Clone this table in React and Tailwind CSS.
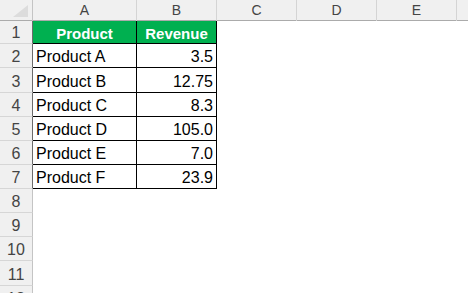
import React from "react";

const products = [
  { name: "Product A", revenue: "3.5" },
  { name: "Product B", revenue: "12.75" },
  { name: "Product C", revenue: "8.3" },
  { name: "Product D", revenue: "105.0" },
  { name: "Product E", revenue: "7.0" },
  { name: "Product F", revenue: "23.9" },
];

// row heights drift a little in the screenshot (scaled Excel), so a few rows get 25px
const rowHeights = {
  1: "h-[23px]",
  3: "h-[25px]",
  11: "h-[25px]",
};

const cols = ["A", "B", "C", "D", "E"];

const RowHead = ({ n, dark }) => (
  <div
    className={`flex items-end justify-center pb-[1px] bg-[#f0f0f0] text-[16px] leading-[18px] text-[#444] border-b border-b-[#d6d6d6] border-r ${
      dark ? "border-r-[#6b6b6b]" : "border-r-[#c4c4c4]"
    }`}
  >
    {n}
  </div>
);

const App = () => {
  const rows = [];
  for (let r = 1; r <= 12; r++) rows.push(r);

  return (
    <div
      className="w-[468px] h-[293px] overflow-hidden bg-white"
      style={{ fontFamily: "'Liberation Sans', Arial, sans-serif" }}
    >
      {/* column header */}
      <div className="grid grid-cols-[33px_104px_80px_80px_80px_80px_1fr] h-[21px] bg-[#f0f0f0] border-b border-[#ababab]">
        <div className="relative border-r border-[#c4c4c4]">
          <svg className="absolute left-[13px] top-[5px]" width="15" height="12" viewBox="0 0 15 12">
            <polygon points="15,0 15,12 0,12" fill="#dcdcdc" />
          </svg>
        </div>
        {cols.map((c) => (
          <div
            key={c}
            className="flex items-center justify-center border-r border-[#d4d4d4] text-[14px] text-[#444]"
          >
            {c}
          </div>
        ))}
        <div />
      </div>

      {rows.map((r) => {
        const h = rowHeights[r] || "h-[24px]";
        const inTable = r <= 7;
        const item = products[r - 2];
        return (
          <div key={r} className={`grid grid-cols-[33px_104px_80px_80px_80px_80px_1fr] ${h}`}>
            <RowHead n={r} dark={inTable} />
            {r === 1 && (
              <>
                <div className="flex items-end justify-center pb-[1px] bg-[#00b050] text-white font-bold text-[15px] leading-[17px] border-r border-b border-black">
                  Product
                </div>
                <div className="flex items-end justify-center pb-[1px] bg-[#00b050] text-white font-bold text-[15px] leading-[17px] border-r border-b border-black">
                  Revenue
                </div>
              </>
            )}
            {r > 1 && inTable && (
              <>
                <div className="flex items-end pl-[3px] pb-[1px] text-black text-[16px] leading-[18px] border-r border-b border-black">
                  {item.name}
                </div>
                <div className="flex items-end justify-end pr-[3px] pb-[1px] text-black text-[16px] leading-[18px] border-r border-b border-black">
                  {item.revenue}
                </div>
              </>
            )}
            {!inTable && (
              <>
                <div />
                <div />
              </>
            )}
            <div />
            <div />
            <div />
            <div />
          </div>
        );
      })}
    </div>
  );
};

export default App;
